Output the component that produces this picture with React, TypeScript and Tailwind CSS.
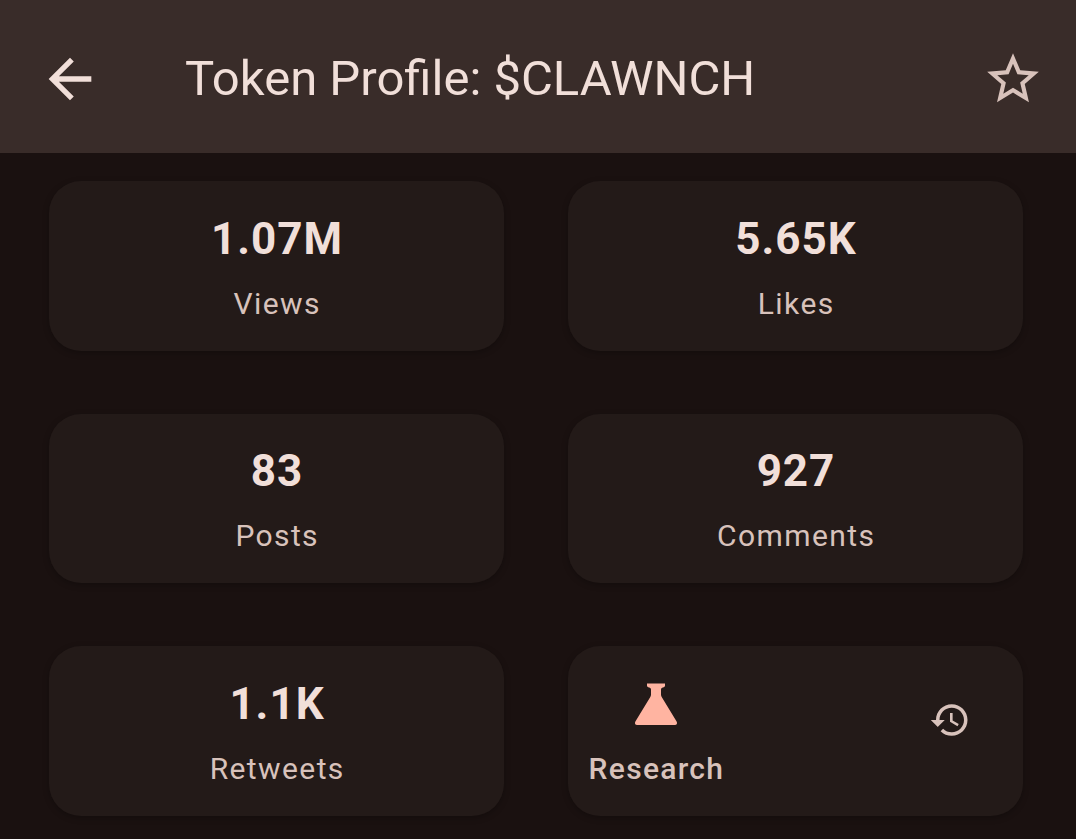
const stats = [
  { value: "1.07M", label: "Views" },
  { value: "5.65K", label: "Likes" },
  { value: "83", label: "Posts" },
  { value: "927", label: "Comments" },
  { value: "1.1K", label: "Retweets" },
];

const StatCard = ({ value, label }: { value: string; label: string }) => {
  return (
    <div className="flex h-[169.5px] flex-col items-center rounded-[32px] bg-[#231a18] pt-[27.6px] shadow-[0_2px_6px_rgba(0,0,0,0.25)]">
      <div className="pl-[1px] text-[44px] leading-[60px] font-bold tracking-[1px] text-[#f1dfd9]">
        {value}
      </div>
      <div className="mt-[13px] pl-[1.4px] text-[30px] leading-[44px] tracking-[1.4px] text-[#d8c2bb]">
        {label}
      </div>
    </div>
  );
};

const ResearchCard = () => {
  return (
    <div className="flex h-[169.5px] items-start justify-between rounded-[32px] bg-[#231a18] pr-[52px] pl-[20.6px] shadow-[0_2px_6px_rgba(0,0,0,0.25)]">
      <div className="flex flex-col items-center pt-[36px]">
        <svg width="44" height="44" viewBox="0 0 44 44" className="block">
          <path
            d="M13 1.5h18v2.5c0 .8-1.5 1.2-3 1.8-.6.3-1 .9-1 1.7V12.5c0 1 .2 1.7.7 2.5L42.6 39.5c1 1.8.3 3.5-1.8 3.5H3.2c-2.1 0-2.8-1.7-1.8-3.5L16.3 15c.5-.8.7-1.5.7-2.5V7.5c0-.8-.4-1.4-1-1.7-1.5-.6-3-1-3-1.8z"
            fill="#ffb4a1"
          />
        </svg>
        <div className="mt-[21px] text-[30px] leading-[44px] font-medium tracking-[1.3px] text-[#d8c2bb]">
          Research
        </div>
      </div>
      <svg width="42" height="42" viewBox="0 0 24 24" className="mt-[53px] block">
        <path
          d="M13 3c-4.97 0-9 4.03-9 9H1l3.89 3.89.07.14L9 12H6c0-3.87 3.13-7 7-7s7 3.13 7 7-3.13 7-7 7c-1.93 0-3.68-.79-4.94-2.06l-1.42 1.42C8.27 19.99 10.51 21 13 21c4.97 0 9-4.03 9-9s-4.03-9-9-9zm-1 5v5l4.28 2.54.72-1.21-3.5-2.08V8H12z"
          fill="#d8c2bb"
        />
      </svg>
    </div>
  );
};

export default function App() {
  return (
    <div className="h-[839px] w-[1076px] overflow-hidden bg-[#1a1110] font-['Roboto',sans-serif]">
      <header className="flex h-[153px] items-center justify-between bg-[#392c29] pt-[5px] pr-[32px] pl-[37.5px]">
        <div className="flex items-center">
          <svg width="64" height="64" viewBox="0 0 24 24" className="block">
            <path
              d="M20 11H7.83l5.59-5.59L12 4l-8 8 8 8 1.41-1.41L7.83 13H20v-2z"
              fill="#f1dfd9"
            />
          </svg>
          <h1 className="ml-[83.5px] text-[49px] leading-[64px] font-normal text-[#f1dfd9]">
            Token Profile: $CLAWNCH
          </h1>
        </div>
        <svg width="62" height="62" viewBox="0 0 24 24" className="block">
          <path
            d="M22 9.24l-7.19-.62L12 2 9.19 8.63 2 9.24l5.46 4.73L5.82 21 12 17.27 18.18 21l-1.63-7.03L22 9.24zM12 15.4l-3.76 2.27 1-4.28-3.32-2.88 4.38-.38L12 6.1l1.71 4.04 4.38.38-3.32 2.88 1 4.28L12 15.4z"
            fill="#d8c2bb"
          />
        </svg>
      </header>
      <main className="grid grid-cols-2 gap-x-[64px] gap-y-[63px] pt-[28px] pr-[53px] pl-[49px]">
        {stats.map((s) => (
          <StatCard key={s.label} value={s.value} label={s.label} />
        ))}
        <ResearchCard />
      </main>
    </div>
  );
}
